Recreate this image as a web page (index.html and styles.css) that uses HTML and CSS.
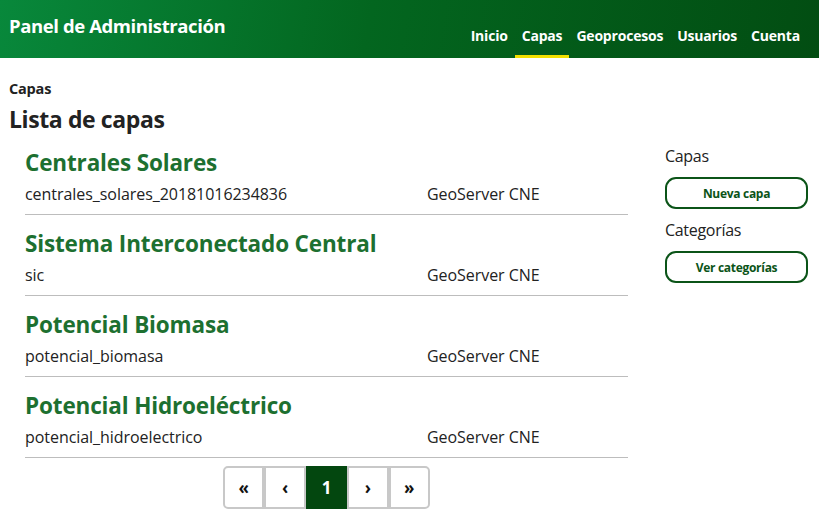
FILE: index.html
```html
<!DOCTYPE html>
<html lang="es">
<head>
<meta charset="utf-8">
<title>Panel de Administración</title>
<link rel="stylesheet" href="styles.css">
</head>
<body>
<header class="topbar">
  <div class="brand">Panel de Administración</div>
  <nav class="nav">
    <a class="nav-link" href="#">Inicio</a>
    <a class="nav-link active" href="#">Capas</a>
    <a class="nav-link" href="#">Geoprocesos</a>
    <a class="nav-link" href="#">Usuarios</a>
    <a class="nav-link" href="#">Cuenta</a>
  </nav>
</header>
<main class="main">
  <div class="crumb">Capas</div>
  <h1 class="page-title">Lista de capas</h1>
  <div class="content">
    <section class="list">
      <article class="item">
        <h2 class="item-title">Centrales Solares</h2>
        <div class="item-row"><span class="item-name">centrales_solares_20181016234836</span><span class="item-src">GeoServer CNE</span></div>
      </article>
      <article class="item">
        <h2 class="item-title">Sistema Interconectado Central</h2>
        <div class="item-row"><span class="item-name">sic</span><span class="item-src">GeoServer CNE</span></div>
      </article>
      <article class="item">
        <h2 class="item-title">Potencial Biomasa</h2>
        <div class="item-row"><span class="item-name">potencial_biomasa</span><span class="item-src">GeoServer CNE</span></div>
      </article>
      <article class="item">
        <h2 class="item-title">Potencial Hidroeléctrico</h2>
        <div class="item-row"><span class="item-name">potencial_hidroelectrico</span><span class="item-src">GeoServer CNE</span></div>
      </article>
      <div class="pager">
        <a class="page" href="#">«</a>
        <a class="page" href="#">‹</a>
        <a class="page current" href="#">1</a>
        <a class="page" href="#">›</a>
        <a class="page" href="#">»</a>
      </div>
    </section>
    <aside class="side">
      <div class="side-label">Capas</div>
      <a class="side-btn" href="#">Nueva capa</a>
      <div class="side-label">Categorías</div>
      <a class="side-btn" href="#">Ver categorías</a>
    </aside>
  </div>
</main>
</body>
</html>
```
FILE: styles.css
```css
* { box-sizing: border-box; }
body {
  margin: 0;
  font-family: "Open Sans", "Noto Sans", sans-serif;
  color: #222;
  background: #fff;
}
a { text-decoration: none; }
.topbar {
  height: 58px;
  background: linear-gradient(100deg, #08883b 0%, #03661f 45%, #024d12 100%);
  display: flex;
  justify-content: space-between;
  padding: 0 12px 0 9px;
}
.brand {
  color: #fff;
  font-weight: 700;
  font-size: 18.5px;
  letter-spacing: -0.4px;
  padding-top: 13px;
}
.nav {
  display: flex;
  align-items: stretch;
  padding-top: 25px;
}
.nav-link {
  color: #fff;
  font-weight: 700;
  font-size: 14px;
  letter-spacing: -0.2px;
  padding: 0 7px;
  border-bottom: 3px solid transparent;
  line-height: 22px;
}
.nav-link.active { border-bottom-color: #f2e000; }
.main { padding: 0 11px 0 9px; }
.crumb {
  font-weight: 700;
  font-size: 14.5px;
  letter-spacing: -0.2px;
  margin-top: 21px;
  line-height: 20px;
}
.page-title {
  margin: 5px 0 0;
  font-size: 23px;
  letter-spacing: -0.4px;
  line-height: 30px;
}
.content {
  display: flex;
  justify-content: space-between;
}
.list {
  width: 603px;
  margin-left: 16px;
}
.item {
  border-bottom: 1px solid #bdbdbd;
  height: 81px;
  padding-top: 14px;
}
.item-title {
  margin: 0;
  font-size: 22.5px;
  line-height: 30px;
  color: #1d7030;
  letter-spacing: -0.15px;
}
.item-row {
  display: flex;
  font-size: 16px;
  line-height: 22px;
  margin-top: 5px;
  letter-spacing: -0.05px;
}
.item-name { width: 402px; }
.pager {
  display: flex;
  justify-content: center;
  margin-top: 8px;
}
.pager .page {
  width: 41.4px;
  height: 43px;
  display: flex;
  align-items: center;
  justify-content: center;
  border: 2px solid #c8c8c8;
  color: #111;
  font-weight: 700;
  font-size: 17px;
  background: #fff;
}
.pager .page:first-child { border-radius: 5px 0 0 5px; }
.pager .page:last-child { border-radius: 0 5px 5px 0; }
.pager .page.current {
  background: #03470f;
  border-color: #03470f;
  color: #fff;
}
.side {
  width: 143px;
  display: flex;
  flex-direction: column;
  padding-top: 11px;
}
.side-label {
  font-size: 16px;
  line-height: 22px;
  letter-spacing: -0.3px;
}
.side-btn {
  margin: 10px 0 10px;
  height: 32px;
  border: 2px solid #0b5418;
  border-radius: 11px;
  color: #0b5418;
  font-weight: 700;
  font-size: 12px;
  display: flex;
  align-items: center;
  justify-content: center;
  letter-spacing: -0.3px;
}
```
